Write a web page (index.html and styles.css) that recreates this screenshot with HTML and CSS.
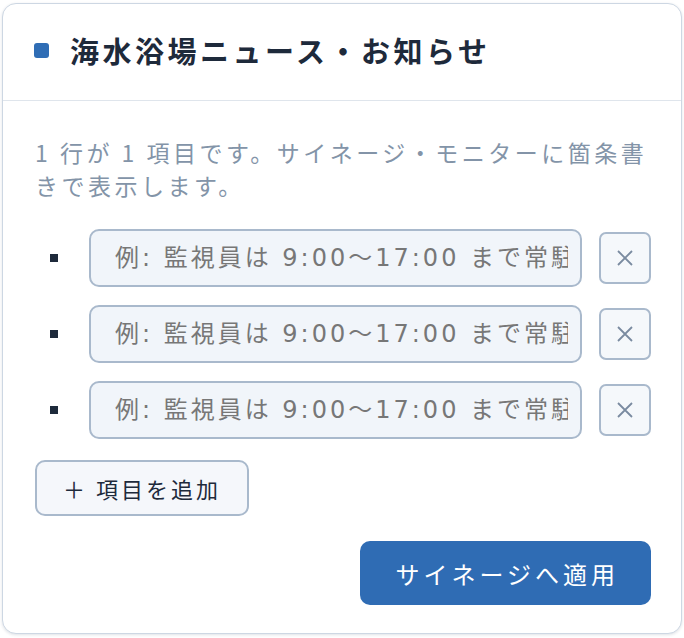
FILE: index.html
```html
<html>

<head>
    <title>海水浴場ニュース・お知らせ</title>
    <link rel="stylesheet" href="styles.css">
</head>

<body>
    <div class="card" id="news">
        <div class="card-head">
            <span class="dot"></span>
            <h2 class="title">海水浴場ニュース・お知らせ</h2>
        </div>
        <div class="card-body">
            <p class="hint">1 行が 1 項目です。サイネージ・モニターに箇条書きで表示します。</p>
            <div class="items" id="items">
                <div class="item">
                    <span class="bullet"></span>
                    <input type="text" class="field" placeholder="例: 監視員は 9:00〜17:00 まで常駐しています">
                    <button class="remove" onclick="removeItem(this)">
                        <svg width="18" height="18" viewBox="0 0 18 18"><path d="M2 2L16 16M16 2L2 16" stroke="#7a8ba0" stroke-width="1.8" fill="none"/></svg>
                    </button>
                </div>
                <div class="item">
                    <span class="bullet"></span>
                    <input type="text" class="field" placeholder="例: 監視員は 9:00〜17:00 まで常駐しています">
                    <button class="remove" onclick="removeItem(this)">
                        <svg width="18" height="18" viewBox="0 0 18 18"><path d="M2 2L16 16M16 2L2 16" stroke="#7a8ba0" stroke-width="1.8" fill="none"/></svg>
                    </button>
                </div>
                <div class="item">
                    <span class="bullet"></span>
                    <input type="text" class="field" placeholder="例: 監視員は 9:00〜17:00 まで常駐しています">
                    <button class="remove" onclick="removeItem(this)">
                        <svg width="18" height="18" viewBox="0 0 18 18"><path d="M2 2L16 16M16 2L2 16" stroke="#7a8ba0" stroke-width="1.8" fill="none"/></svg>
                    </button>
                </div>
            </div>
            <button class="add" onclick="addItem()">＋ 項目を追加</button>
            <div class="actions">
                <button class="apply">サイネージへ適用</button>
            </div>
        </div>
    </div>
    <script>
        function addItem() {
            var list = document.getElementById("items");
            var row = list.children[0].cloneNode(true);
            row.querySelector("input").value = "";
            list.appendChild(row);
        }

        function removeItem(btn) {
            var row = btn.parentNode;
            row.parentNode.removeChild(row);
        }
    </script>
</body>
</html>
```

FILE: styles.css
```css
body {
    margin: 0;
    background: #ffffff;
    font-family: "Noto Sans CJK JP", "Noto Sans", sans-serif;
}

.card {
    margin: 3px 2px 2px 2px;
    height: 631px;
    box-sizing: border-box;
    border: 1px solid #cdd7e3;
    border-radius: 14px;
    background: #ffffff;
    box-shadow: 0 1px 3px rgba(30, 50, 80, 0.14);
}

.card-head {
    display: flex;
    align-items: center;
    height: 92px;
    padding: 0 0 4px 31px;
    border-bottom: 1px solid #dfe5ec;
}

.dot {
    width: 15px;
    height: 15px;
    border-radius: 3px;
    background: #2f6db5;
}

.title {
    margin: 0 0 0 21px;
    font-size: 29px;
    font-weight: bold;
    letter-spacing: 3.5px;
    color: #1e2a3b;
}

.card-body {
    padding: 35px 30px 0 32px;
}

.hint {
    margin: 0;
    font-size: 23px;
    line-height: 33px;
    letter-spacing: 3.5px;
    color: #8394a8;
}

.items {
    display: flex;
    flex-direction: column;
    gap: 18px;
    margin-top: 27px;
}

.item {
    display: flex;
    align-items: center;
}

.bullet {
    display: flex;
    width: 54px;
}

.bullet::before {
    content: "";
    width: 8px;
    height: 8px;
    margin-left: 15px;
    background: #1e2a3b;
}

.field {
    flex: 1;
    min-width: 0;
    height: 58px;
    box-sizing: border-box;
    padding: 0 12px 0 24px;
    border: 2px solid #a9b9cc;
    border-radius: 10px;
    background: #f1f5fa;
    font-family: "DejaVu Sans", "Noto Sans CJK JP", sans-serif;
    font-size: 24px;
    letter-spacing: 3px;
    color: #1e2a3b;
}

.field::placeholder {
    color: #777777;
}

.remove {
    display: flex;
    align-items: center;
    justify-content: center;
    width: 52px;
    height: 52px;
    margin-left: 17px;
    padding: 0;
    border: 2px solid #a9b9cc;
    border-radius: 7px;
    background: #f5f8fb;
}

.add {
    margin-top: 21px;
    height: 56px;
    padding: 0 26px;
    border: 2px solid #a9b9cc;
    border-radius: 10px;
    background: #f5f7fb;
    color: #1e2a3b;
    font-family: inherit;
    font-size: 22px;
    letter-spacing: 3px;
}

.actions {
    display: flex;
    justify-content: flex-end;
    margin-top: 25px;
}

.apply {
    height: 64px;
    padding: 0 32px 0 35px;
    border: none;
    border-radius: 10px;
    background: #2f6cb4;
    color: #ffffff;
    font-family: inherit;
    font-size: 24px;
    letter-spacing: 4px;
}
```
